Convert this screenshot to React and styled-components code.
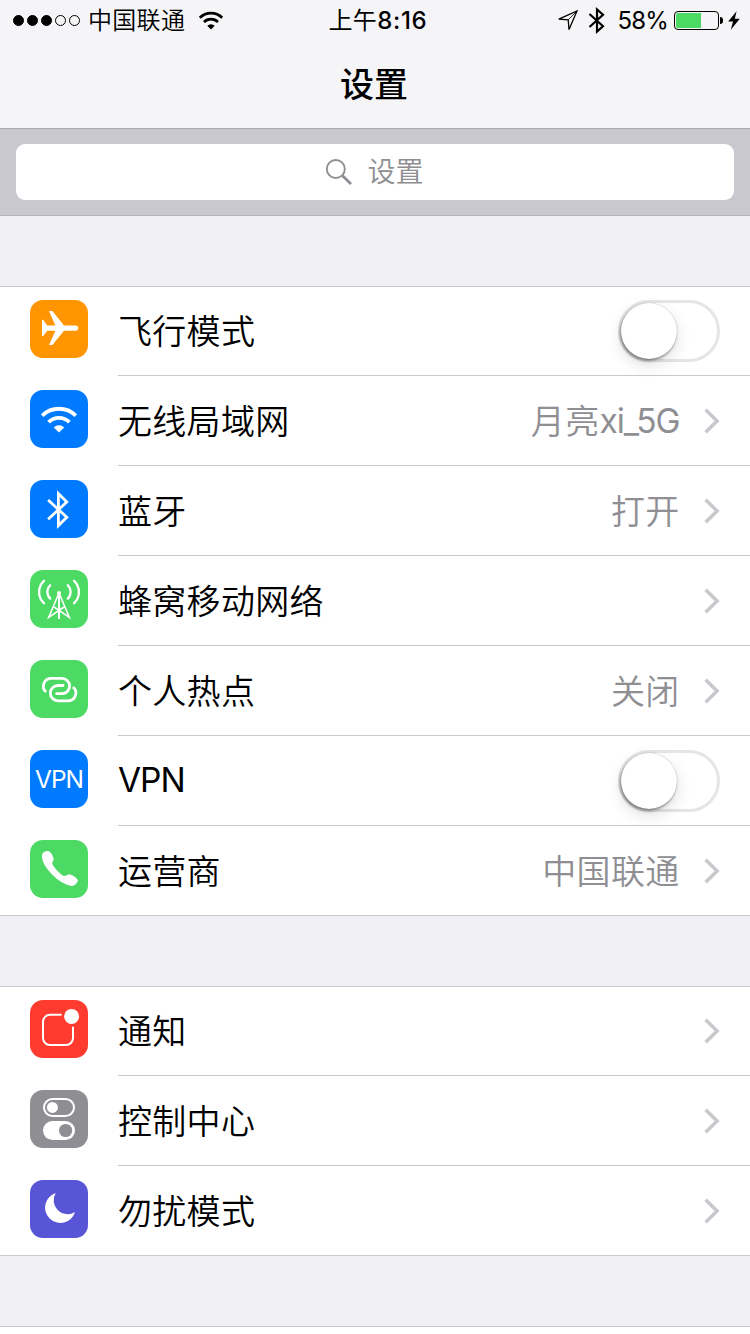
import React from "react";
import styled, { createGlobalStyle } from "styled-components";

const GlobalStyle = createGlobalStyle`
  * {
    box-sizing: border-box;
  }
  body {
    margin: 0;
    background: #efeff4;
    color: #000;
    font-family: Inter, "Noto Sans CJK SC", sans-serif;
    overflow: hidden;
  }
  svg {
    display: block;
    flex: none;
  }
`;

const Glyph = ({ children }) => (
  <svg width="58" height="58" viewBox="0 0 58 58" fill="none">
    {children}
  </svg>
);

const AirplaneIcon = () => (
  <Glyph>
    <path
      fill="#fff"
      d="M12 19.6 13.3 19.9 17.2 25.4H25.4L19 11H22.4L34 25.4H46.2a2.7 2.7 0 0 1 0 5.3H34L22.4 45H19L25.4 30.7H17.2L13.3 35.9 12 36.2Z"
    />
  </Glyph>
);

const WifiIcon = () => (
  <Glyph>
    <g stroke="#fff" strokeWidth="3.8">
      <path d="M12.2 25.7a23.8 23.8 0 0 1 33.6 0" />
      <path d="M18.6 32.1a14.7 14.7 0 0 1 20.8 0" />
    </g>
    <path fill="#fff" d="M29 42.6 23.8 37.4a7.4 7.4 0 0 1 10.4 0Z" />
  </Glyph>
);

const BluetoothIcon = () => (
  <Glyph>
    <path
      stroke="#fff"
      strokeWidth="2.8"
      d="M18.1 20 36.8 37.2 28.4 45.6V13.6L36.8 22 18.1 39.2"
    />
  </Glyph>
);

const CellularIcon = () => (
  <Glyph>
    <g stroke="#fff" strokeWidth="2.3" strokeLinecap="round">
      <path d="M20.2 15.2a9.4 9.4 0 0 0 0 13.4M37.8 15.2a9.4 9.4 0 0 1 0 13.4" />
      <path d="M14 10.8a15.2 15.2 0 0 0 0 22.4M44 10.8a15.2 15.2 0 0 1 0 22.4" />
    </g>
    <g stroke="#fff" strokeWidth="1.6">
      <path strokeWidth="2" d="M29 22V49" />
      <path d="M29 23 18.7 47.3 34 37M29 23 39.3 47.3 24 37" />
    </g>
    <circle cx="29" cy="23" r="2.1" fill="#fff" />
  </Glyph>
);

const HotspotIcon = () => (
  <Glyph>
    <g stroke="#fff" strokeWidth="2.8">
      <path d="M16 32A7.8 7.8 0 0 1 20.6 18.4H32A7.6 7.6 0 0 1 32 33.7H26.6" />
      <path d="M43 27A7.8 7.8 0 0 1 38.4 40.8H28A7.6 7.6 0 0 1 28 25.5H33" />
    </g>
    <g fill="#fff">
      <circle cx="26.6" cy="33.7" r="1.4" />
      <circle cx="33" cy="25.5" r="1.4" />
    </g>
  </Glyph>
);

const PhoneIcon = () => (
  <Glyph>
    <path
      fill="#fff"
      d="M16.8 11.1C14.5 11.6 12 13 12 15.8C12 20 13.5 24 17.5 29.3C23 36.5 30 42 37 44.8C41 46.3 44 46.6 46.3 43.5C47.8 41.5 48.4 40.6 47.5 39.4C45.5 37 42.5 35 40.2 34.4C38.5 34 36 36.2 34 36.1C31.5 35.6 23.3 27.3 22.3 23.8C22 22.3 23.8 20.3 23.7 18.8C23.3 16.5 21.5 13.5 20 12C19 11 18 10.8 16.8 11.1Z"
    />
  </Glyph>
);

const NotificationIcon = () => (
  <Glyph>
    <path
      stroke="#fff"
      strokeWidth="2"
      d="M31.6 14.8H20a7 7 0 0 0-7 7V38a7 7 0 0 0 7 7H36a7 7 0 0 0 7-7V26.8"
    />
    <circle cx="41.6" cy="16.4" r="7.5" fill="#fff" />
  </Glyph>
);

const ControlIcon = () => (
  <Glyph>
    <rect x="14" y="9" width="30" height="17" rx="8.5" stroke="#fff" strokeWidth="2" />
    <circle cx="22.4" cy="17.4" r="5.5" fill="#fff" />
    <rect x="13" y="31" width="32" height="19" rx="9.5" fill="#fff" />
    <circle cx="35.6" cy="40.5" r="6.6" fill="#8e8e93" />
  </Glyph>
);

const MoonIcon = () => (
  <Glyph>
    <path fill="#fff" d="M25.7 13A15.3 15.3 0 1 0 45 32A13.9 13.9 0 0 1 25.7 13Z" />
  </Glyph>
);

const Chevron = () => (
  <svg width="16" height="26" viewBox="0 0 16 26" fill="none">
    <path d="M1.6 1.8 13.1 13 1.6 24.2" stroke="#c7c7cc" strokeWidth="3.4" />
  </svg>
);

const groups = [
  [
    { label: "飞行模式", color: "#ff9500", icon: <AirplaneIcon />, toggle: true },
    {
      label: "无线局域网",
      color: "#007aff",
      icon: <WifiIcon />,
      value: "月亮",
      suffix: "xi_5G",
    },
    { label: "蓝牙", color: "#007aff", icon: <BluetoothIcon />, value: "打开" },
    { label: "蜂窝移动网络", color: "#4cd964", icon: <CellularIcon /> },
    { label: "个人热点", color: "#4cd964", icon: <HotspotIcon />, value: "关闭" },
    { label: "VPN", color: "#007aff", icon: "VPN", toggle: true, latin: true },
    { label: "运营商", color: "#4cd964", icon: <PhoneIcon />, value: "中国联通" },
  ],
  [
    { label: "通知", color: "#ff3b30", icon: <NotificationIcon /> },
    { label: "控制中心", color: "#8e8e93", icon: <ControlIcon /> },
    { label: "勿扰模式", color: "#5856d6", icon: <MoonIcon /> },
  ],
];

const StatusBar = () => (
  <Status>
    <StatusSide>
      <Signal>
        {[1, 1, 1, 0, 0].map((on, i) => (
          <Dot key={i} $on={on} />
        ))}
      </Signal>
      <Carrier>中国联通</Carrier>
      <svg width="26" height="20" viewBox="0 0 26 20" fill="none">
        <g stroke="#000" strokeWidth="2.7">
          <path d="M1.8 6.7a15.9 15.9 0 0 1 22.4 0" />
          <path d="M6 11.1a9.9 9.9 0 0 1 14 0" />
        </g>
        <path fill="#000" d="M13 18.6 9.3 14.8a5.3 5.3 0 0 1 7.4 0Z" />
      </svg>
    </StatusSide>
    <Clock>
      上午<Digits>8:16</Digits>
    </Clock>
    <StatusSide $end>
      <svg width="22" height="22" viewBox="0 0 22 22" fill="none">
        <path d="M1.8 9.2 20 1 12 19.6 11.2 9.8Z" stroke="#000" strokeWidth="1.3" />
        <path d="M20 1 11.2 9.8" stroke="#000" strokeWidth="0.8" />
      </svg>
      <Bluetooth width="18" height="28" viewBox="0 0 18 28" fill="none">
        <path d="M1.5 7 15 19.2 9 24.5V2.5L15 7.8 1.5 20" stroke="#000" strokeWidth="2.2" />
      </Bluetooth>
      <Percent>58%</Percent>
      <Battery>
        <Charge style={{ width: `${58 * 0.43}px` }} />
      </Battery>
      <BatteryCap />
      <svg width="12" height="20" viewBox="0 0 12 20">
        <path d="M8.6 0.3 0.2 10.5H5L2.8 18.7 11.8 7.8H6.8Z" />
      </svg>
    </StatusSide>
  </Status>
);

const SettingRow = ({ label, color, icon, value, suffix, toggle, latin }) => (
  <Row>
    <IconTile $color={color}>{icon}</IconTile>
    <RowBody>
      <Label $latin={latin}>{label}</Label>
      {value && (
        <Value>
          {value}
          {suffix && <Suffix>{suffix}</Suffix>}
        </Value>
      )}
      {toggle ? (
        <Toggle>
          <Knob />
        </Toggle>
      ) : (
        <Chevron />
      )}
    </RowBody>
  </Row>
);

const App = () => {
  return (
    <Screen>
      <GlobalStyle />
      <Header>
        <StatusBar />
        <Title>设置</Title>
      </Header>
      <SearchBar>
        <SearchField>
          <svg width="28" height="28" viewBox="0 0 28 28" fill="none" stroke="#8e8e93">
            <circle cx="10.8" cy="11" r="9" strokeWidth="1.9" />
            <path d="M17.3 17.5 26 26" strokeWidth="2.8" />
          </svg>
          <span>设置</span>
        </SearchField>
      </SearchBar>
      {groups.map((rows, i) => (
        <Group key={i}>
          {rows.map((row) => (
            <SettingRow key={row.label} {...row} />
          ))}
        </Group>
      ))}
      <Group>
        <Row />
      </Group>
    </Screen>
  );
};

export default App;

const Screen = styled.div`
  width: 750px;
  height: 1334px;
  overflow: hidden;
  background: #efeff4;
`;

const Header = styled.header`
  height: 129px;
  background: #f5f5f7;
  border-bottom: 1px solid #a9a8ad;
`;

const Status = styled.div`
  display: grid;
  grid-template-columns: 1fr auto 1fr;
  align-items: center;
  height: 41px;
  padding: 1px 10px 0 13px;
  font-size: 24px;
  line-height: 40px;
`;

const StatusSide = styled.div`
  display: flex;
  align-items: center;
  height: 40px;
  justify-content: ${({ $end }) => ($end ? "flex-end" : "flex-start")};
`;

const Signal = styled.div`
  display: flex;
  gap: 3px;
  margin: 0 8px 1px 0;
`;

const Dot = styled.span`
  width: 11px;
  height: 11px;
  border-radius: 50%;
  border: 1px solid #000;
  background: ${({ $on }) => ($on ? "#000" : "transparent")};
`;

const Carrier = styled.span`
  margin-right: 12.5px;
  font-weight: 350;
  letter-spacing: 0.3px;
`;

const Clock = styled.span`
  padding-left: 3px;
  font-weight: 400;
  letter-spacing: 0.3px;
`;

const Digits = styled.span`
  font-weight: 550;
  letter-spacing: 0.7px;
`;

const Bluetooth = styled.svg`
  margin: 0 11px 0 9px;
`;

const Percent = styled.span`
  margin-right: 6px;
  letter-spacing: -0.8px;
`;

const Battery = styled.div`
  width: 45px;
  height: 19px;
  margin-bottom: 1px;
  padding: 1px;
  border: 1px solid #000;
  border-radius: 4px;
`;

const Charge = styled.div`
  height: 15px;
  background: #4cd964;
  border-radius: 2px 0 0 2px;
`;

const BatteryCap = styled.div`
  width: 3px;
  height: 7px;
  margin: 0 5px 1px 1px;
  background: #000;
  border-radius: 0 3px 3px 0;
`;

const Title = styled.h1`
  margin: 0;
  padding-right: 2px;
  font-size: 34px;
  font-weight: 500;
  line-height: 88px;
  text-align: center;
`;

const SearchBar = styled.div`
  height: 87px;
  padding: 15px 16px;
  background: #c9c8ce;
  border-bottom: 1px solid #b5b4ba;
`;

const SearchField = styled.div`
  display: flex;
  align-items: center;
  justify-content: center;
  gap: 14px;
  height: 56px;
  padding-right: 1px;
  border-radius: 9px;
  background: #fff;
  color: #8e8e93;
  font-size: 28px;
  font-weight: 350;
  line-height: 56px;
`;

const Group = styled.section`
  margin-top: 70px;
  background: #fff;
  box-shadow: inset 0 1px #c8c7cc, inset 0 -1px #c8c7cc;
`;

const RowBody = styled.div`
  flex: 1;
  display: flex;
  align-items: center;
  height: 90px;
  padding-right: 30px;
  box-shadow: inset 0 -1px #c8c7cc;
`;

const Row = styled.div`
  display: flex;
  align-items: center;
  gap: 30px;
  height: 90px;
  padding-left: 30px;
  &:last-child ${RowBody} {
    box-shadow: none;
  }
`;

const IconTile = styled.div`
  display: flex;
  align-items: center;
  justify-content: center;
  width: 58px;
  height: 58px;
  margin-bottom: 4px;
  border-radius: 13px;
  background: ${({ $color }) => $color};
  color: #fff;
  font-size: 24.5px;
  font-weight: 400;
  letter-spacing: -1px;
`;

const Label = styled.span`
  flex: 1;
  padding-top: ${({ $latin }) => ($latin ? 0 : "2px")};
  font-size: ${({ $latin }) => ($latin ? "33.5px" : "34px")};
  font-weight: ${({ $latin }) => ($latin ? 400 : 350)};
  line-height: ${({ $latin }) => ($latin ? "88px" : "86px")};
  letter-spacing: ${({ $latin }) => ($latin ? "-1px" : "0.3px")};
  margin-bottom: ${({ $latin }) => ($latin ? "2px" : 0)};
`;

const Value = styled.span`
  margin-right: 24.5px;
  padding-top: 2px;
  color: #8e8e93;
  font-size: 34px;
  font-weight: 350;
  line-height: 86px;
  letter-spacing: 0.3px;
`;

const Suffix = styled.span`
  font-size: 33.5px;
  font-weight: 400;
  line-height: 1;
  letter-spacing: -1.1px;
  vertical-align: 1px;
`;

const Toggle = styled.div`
  width: 102px;
  height: 62px;
  border: 3px solid #e5e5e5;
  border-radius: 31px;
`;

const Knob = styled.div`
  width: 56px;
  height: 56px;
  border-radius: 50%;
  background: #fff;
  box-shadow: 0 0 1px rgba(0, 0, 0, 0.3), -1px 2px 3px rgba(0, 0, 0, 0.4),
    0 6px 16px rgba(0, 0, 0, 0.13);
`;
